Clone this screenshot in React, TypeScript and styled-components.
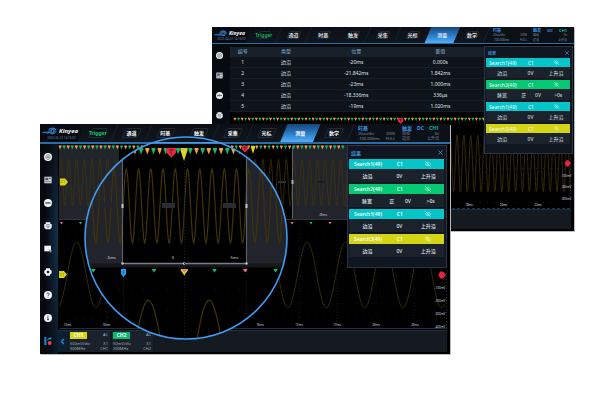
import React from "react";
import styled, { createGlobalStyle } from "styled-components";
import { ChevronLeft, EyeOff, X } from "lucide-react";

const GlobalStyle = createGlobalStyle`
  * { box-sizing: border-box; }
  body { margin: 0; background: #fff; }
  button { font: inherit; color: inherit; background: none; border: 0; padding: 0; margin: 0; cursor: pointer; }
`;

const Stage = styled.main`
  display: grid;
  grid-template-columns: 40fr 172fr 238fr 124fr 26fr;
  grid-template-rows: 27px 97px 107px 123px;
  min-height: 412px;
  align-content: start;
  background: #fff;
  font-family: "Noto Sans", "Noto Sans CJK SC", sans-serif;
`;

type Size = { $small?: boolean };

const Device = styled.section<Size>`
  position: relative;
  grid-column: ${(p) => (p.$small ? "3 / 5" : "2 / 4")};
  grid-row: ${(p) => (p.$small ? "2 / 4" : "3 / 5")};
  display: flex;
  flex-direction: column;
  min-width: 0;
  background: #05080c;
  color: #dfe5ec;
  box-shadow: 1px 1px 0 #b9bcbf;
`;

const Header = styled.header<Size>`
  display: flex;
  flex: none;
  height: ${(p) => (p.$small ? 17 : 20)}px;
  background: #0c1118;
  border-bottom: ${(p) => (p.$small ? 1 : 2)}px solid #2b6cab;
  overflow: hidden;
`;

const Brand = styled.div<Size>`
  flex: none;
  width: ${(p) => (p.$small ? 37 : 41)}px;
  display: grid;
  grid-template-columns: ${(p) => (p.$small ? 13 : 15)}px auto;
  align-content: center;
  column-gap: 2px;
  padding-left: 2px;
  background: #080c12;
`;

const BrandName = styled.strong<Size>`
  font-size: ${(p) => (p.$small ? 5 : 6)}px;
  line-height: ${(p) => (p.$small ? 7 : 9)}px;
  font-style: italic;
  color: #f4f7fb;
`;

const BrandDate = styled.time`
  grid-column: 1 / 3;
  font-size: 3px;
  line-height: 4px;
  text-align: center;
  white-space: nowrap;
  color: #6a8098;
`;

const Menu = styled.nav<Size>`
  flex: none;
  display: grid;
  grid-template-columns: repeat(8, 1fr);
  width: ${(p) => (p.$small ? 238 : 270)}px;
`;

const MenuItem = styled.button<Size & { $kind?: "trigger" | "active" }>`
  position: relative;
  z-index: 0;
  font-size: 5px;
  font-weight: ${(p) => (p.$small ? 500 : 700)};
  line-height: 8px;
  white-space: nowrap;
  color: ${(p) => (p.$kind === "trigger" ? "#16c76a" : "#f2f5f8")};
  &::before {
    content: "";
    position: absolute;
    inset: 0;
    z-index: -1;
    transform: skewX(-23deg);
    border-right: 1px solid #1c222b;
    background: ${(p) =>
      p.$kind === "active" ? "linear-gradient(#17467a, #2f83d0 60%, #55aef5)" : "linear-gradient(#0b0f15, #10161e)"};
  }
  &::after {
    content: "";
    position: absolute;
    inset: 4px 9px;
    z-index: -1;
    transform: skewX(-23deg);
    border: 1px solid ${(p) => (p.$kind === "active" ? "transparent" : "#222a33")};
    border-radius: 2px;
  }
`;

const Status = styled.div<Size>`
  display: grid;
  flex: none;
  grid-template-columns: 1fr auto;
  align-content: center;
  width: ${(p) => (p.$small ? 34 : 37)}px;
  margin-left: ${(p) => (p.$small ? 6 : 7)}px;
  font-size: ${(p) => (p.$small ? 3 : 4)}px;
  line-height: 5px;
  white-space: nowrap;
  color: #8793a1;
`;

const StatusTitle = styled.strong<Size>`
  grid-column: 1 / 3;
  display: flex;
  justify-content: space-between;
  font-size: ${(p) => (p.$small ? 4 : 5)}px;
  line-height: ${(p) => (p.$small ? 5 : 6)}px;
  color: #3d8fe4;
`;

const Teal = styled.span`
  color: #12b3a4;
`;

const Body = styled.div`
  flex: 1;
  min-height: 0;
  display: flex;
`;

const Rail = styled.aside<Size>`
  flex: none;
  width: 18px;
  overflow: hidden;
  display: flex;
  flex-direction: column;
  align-items: center;
  padding: 1px 3px 0 0;
  background: ${(p) =>
    p.$small
      ? "linear-gradient(110deg, #070a0f 45%, #12314d)"
      : "linear-gradient(to right, #06090e 30%, transparent), linear-gradient(#0d151e, #123451 45%, #0b1a29)"};
`;

const RailButton = styled.button<Size>`
  flex: none;
  display: grid;
  place-items: center;
  width: 15px;
  height: ${(p) => (p.$small ? 20 : 23)}px;
  svg {
    width: ${(p) => (p.$small ? 7 : 8)}px;
    height: ${(p) => (p.$small ? 7 : 8)}px;
  }
`;

const Main = styled.div`
  position: relative;
  flex: 1;
  min-width: 0;
  display: flex;
  flex-direction: column;
  background: #000;
`;

const Plot = styled.svg`
  display: block;
  width: 100%;
  flex: 1;
  min-height: 0;
`;

const PlotText = styled.text<{ $large?: boolean }>`
  font-size: ${(p) => (p.$large ? 4 : 3)}px;
  fill: #d8dce1;
  text-anchor: middle;
`;

const Footer = styled.footer<Size>`
  flex: none;
  height: ${(p) => (p.$small ? 20 : 22)}px;
  margin: 0 3px 2px 0;
  display: flex;
  gap: 2px;
  background: #151a21;
  border-top: 1px solid #202d3a;
`;

const FooterToggle = styled.button`
  width: 9px;
  display: grid;
  place-items: center;
  color: #2f8fe6;
  background: #0d2033;
`;

const Channel = styled.div`
  display: grid;
  grid-template-columns: 1fr auto;
  align-content: center;
  width: 41px;
  padding: 0 2px 0 1px;
  font-size: 4px;
  line-height: 5px;
  color: #a3aebb;
  background: #1a212a;
`;

const Badge = styled.strong<{ $color: string }>`
  width: 17px;
  margin-bottom: 2px;
  font-size: 5px;
  line-height: 7px;
  text-align: center;
  color: #fff;
  background: ${(p) => p.$color};
`;

const Right = styled.span`
  text-align: right;
`;

const Panel = styled.aside<Size>`
  position: absolute;
  top: ${(p) => (p.$small ? 2 : 1)}px;
  right: ${(p) => (p.$small ? 1 : 3)}px;
  width: ${(p) => (p.$small ? 89 : 100)}px;
  padding: 0 2px ${(p) => (p.$small ? 7 : 8)}px 1px;
  background: #111720;
  border: 1px solid #273646;
`;

const PanelHead = styled.header<Size>`
  display: flex;
  align-items: center;
  justify-content: space-between;
  height: ${(p) => (p.$small ? 11 : 13)}px;
  padding: 0 0 0 2px;
  font-size: ${(p) => (p.$small ? 4 : 5)}px;
  font-weight: 700;
  color: #3b8bd8;
  svg { display: block; }
`;

const Bar = styled.div<Size & { $color: string }>`
  display: grid;
  grid-template-columns: 40% 27% 33%;
  align-items: center;
  height: ${(p) => (p.$small ? 9 : 10)}px;
  font-size: 5px;
  line-height: 8px;
  font-weight: ${(p) => (p.$small ? 400 : 600)};
  text-align: center;
  white-space: nowrap;
  color: #f4feff;
  background: ${(p) => p.$color};
  svg { display: block; margin: auto; }
`;

const Detail = styled.div<Size & { $four?: boolean }>`
  display: grid;
  grid-template-columns: ${(p) => (p.$four ? "38% 14% 20% 28%" : "39% 28% 33%")};
  align-items: center;
  height: ${(p) => (p.$small ? 11 : 13)}px;
  margin-bottom: 2px;
  font-size: 5px;
  line-height: 8px;
  font-weight: ${(p) => (p.$small ? 400 : 500)};
  text-align: center;
  white-space: nowrap;
  background: #1b222b;
`;

const Table = styled.table`
  width: calc(100% - 89px);
  table-layout: fixed;
  border-collapse: collapse;
  border-spacing: 0;
  background: #0f141b;
  border-top: 3px solid #07090d;
  font-size: 5px;
  line-height: 7px;
  text-align: center;
  th, td { padding: 0; height: 11px; }
  th { font-weight: 500; color: #6f93b5; background: #182029; }
  tbody td { box-shadow: inset 0 -1px #171d25; }
`;

const Col = styled.col<{ $share: number }>`
  width: ${(p) => p.$share}%;
`;

const Lens = styled.svg`
  position: absolute;
  left: 44px;
  top: 12px;
  width: 204px;
  height: 204px;
  display: block;
  pointer-events: none;
`;

const GREEN = "#16b765";
const ORANGE = "#efa640";
const PINK = "#ef6aa5";

function wave(x0: number, x1: number, peak: number, period: number, mid: number, amp: number) {
  const step = period / 24;
  let d = "";
  for (let x = x0; x <= x1; x += step) {
    const y = mid - amp * Math.cos(((x - peak) / period) * Math.PI * 2);
    d += `${d ? "L" : "M"}${x.toFixed(2)} ${y.toFixed(2)}`;
  }
  return d;
}

type WaveProps = { range: [number, number]; peak: number; period: number; mid: number; amp: number; width?: number };
const Wave = ({ range, peak, period, mid, amp, width = 0.8 }: WaveProps) => (
  <path d={wave(range[0], range[1], peak, period, mid, amp)} fill="none" stroke="#3f330a" strokeWidth={width} />
);

const Tri = ({ x, y, w, h, fill }: { x: number; y: number; w: number; h: number; fill: string }) => (
  <path d={`M${x - w / 2} ${y}h${w}v${h * 0.2}L${x} ${y + h}L${x - w / 2} ${y + h * 0.2}z`} fill={fill} />
);

const Triangles = ({ from, to, y, pitch, w, h }: { from: number; to: number; y: number; pitch: number; w: number; h: number }) => (
  <g>
    {Array.from({ length: Math.floor((to - from) / pitch) + 1 }, (_, i) => (
      <Tri key={i} x={from + i * pitch} y={y} w={w} h={h} fill={i % 2 ? GREEN : ORANGE} />
    ))}
  </g>
);

const Dots = ({ x, y, w, h, dx, dy }: { x: number; y: number; w: number; h: number; dx: number; dy: number }) => (
  <g stroke="#26292e" strokeWidth="0.7">
    {Array.from({ length: Math.floor(h / dy) + 1 }, (_, i) => (
      <path key={i} d={`M${x} ${y + i * dy}h${w}`} strokeDasharray={`1 ${dx - 1}`} />
    ))}
  </g>
);

const Flag = ({ x, y }: { x: number; y: number }) => (
  <g>
    <path d={`M${x} ${y - 3.5}h5l3 3.5l-3 3.5h-5z`} fill="#d9d51c" />
    <text x={x + 0.6} y={y + 1.4} fontSize="4" fill="#6b6a10">C1</text>
  </g>
);

const TMark = ({ x, y, r }: { x: number; y: number; r: number }) => (
  <g>
    <path d={`M${x - r} ${y}h${2 * r}v${r}L${x} ${y + 2 * r}L${x - r} ${y + r}z`} fill="#e52a43" />
    <path d={`M${x - r / 2} ${y + r * 0.4}h${r}M${x} ${y + r * 0.4}v${r}`} stroke="#7a1020" strokeWidth="0.9" fill="none" />
  </g>
);

function FrontPlot() {
  return (
    <Plot viewBox="58 144 392 186" preserveAspectRatio="none" role="img" aria-label="CH1">
      <rect x="58" y="144" width="392" height="186" fill="#000" />
      <rect x="59" y="145" width="60" height="74" fill="#22242b" />
      <rect x="292" y="145" width="56" height="74" fill="#22242b" />
      <Dots x={62} y={156} w={286} h={60} dx={8} dy={12} />
      <Wave range={[59, 348]} peak={61} period={7.77} mid={182.5} amp={23.5} />
      <rect x="278" y="181" width="8" height="2" fill="#2c2e34" />
      <rect x="318" y="181" width="6" height="2" fill="#1a1c22" />
      <path d="M292.5 146v73" stroke="#5d6068" />
      <rect x="291.500" y="180" width="2" height="4" fill="#aeb3bb" />
      <path d="M59 219.5h289" stroke="#30343b" />
      <Triangles from={60} to={346} y={145.5} pitch={4.1} w={2.6} h={4} />
      <TMark x={245} y={146} r={3.2} />
      <Tri x={253} y={146} w={4} h={8} fill="#d9d51c" />
      <PlotText x="323" y="216">20ms</PlotText>
      <Flag x={60} y={182} />
      <Dots x={60} y={234} w={385} h={84} dx={8} dy={14} />
      <path d="M107 222v106M299 222v106M337 222v106M376 222v106M414 222v106" stroke="#17191d" strokeDasharray="1 2" />
      {[61.5, 292, 330].map((x) => <Tri key={x} x={x} y={222} w={2.5} h={2.5} fill={PINK} />)}
      {[80.5, 311].map((x) => <Tri key={x} x={x} y={222} w={2.5} h={2.5} fill={GREEN} />)}
      <Wave range={[59, 446]} peak={76.7} period={38.4} mid={275} amp={33} />
      <Flag x={59} y={274.5} />
      <path d="M446 275l-3-3.5h-3l-1.5 3.5l1.5 3.5h3z" fill="#e52340" />
      <path d="M446.5 222v106" stroke="#23303b" strokeDasharray="1 2" />
      {["-100mV", "-200mV", "-300mV", "-400mV"].map((t, i) => (
        <PlotText key={t} x="440" y={289 + i * 13}>{t}</PlotText>
      ))}
      {["-12ms", "-16ms", "16ms", "17ms", "17ms", "20ms", "20ms"].map((t, i) => (
        <PlotText key={i} x={[67, 106, 260, 299, 337, 376, 415][i]} y="326">{t}</PlotText>
      ))}
      <path d="M59 328.5h388" stroke="#1c2f42" />
    </Plot>
  );
}

function BackPlot() {
  return (
    <Plot viewBox="230 114 344 95" preserveAspectRatio="none" role="img" aria-label="CH1">
      <rect x="230" y="114" width="344" height="95" fill="#000" />
      <Triangles from={235} to={486} y={119.5} pitch={3.55} w={2.4} h={3.2} />
      <TMark x={400.5} y={120} r={2.8} />
      <Dots x={452} y={136} w={118} h={66} dx={7} dy={11} />
      <Wave range={[450, 571]} peak={457} period={6.9} mid={164} amp={27.5} />
      <path d="M570.5 136v72" stroke="#1b4357" strokeDasharray="1 2" />
      <path d="M571 164l-2.5-3h-2l-2 3l2 3h2z" fill="#e52340" />
      {["-100mV", "-200mV", "-300mV"].map((t, i) => (
        <PlotText key={t} x="566" y={177 + i * 11.5}>{t}</PlotText>
      ))}
      {["18ms", "20ms", "22ms"].map((t, i) => (
        <PlotText key={t} x={469 + i * 34.5} y="206">{t}</PlotText>
      ))}
      <path d="M232 208h339" stroke="#16384c" strokeDasharray="3 2" />
    </Plot>
  );
}

function Magnifier() {
  return (
    <Lens viewBox="84 136 204 204" aria-hidden="true">
      <defs>
        <clipPath id="lens"><circle cx="186" cy="238" r="101" /></clipPath>
      </defs>
      <g clipPath="url(#lens)">
        <rect x="84" y="144" width="204" height="196" fill="#000" />
        <path d="M84 142.8h204" stroke="#4c9ae6" strokeWidth="1.6" />
        <rect x="84" y="146" width="39" height="118" fill="#22242b" />
        <rect x="246" y="146" width="42" height="118" fill="#22242b" />
        <Dots x={90} y={162} w={196} h={90} dx={12} dy={19} />
        <Wave range={[84, 288]} peak={126.3} period={12.25} mid={206} amp={37} width={1.2} />
        <rect x="103" y="203" width="9" height="5" fill="#22242b" />
        <rect x="162" y="203" width="13" height="5" fill="#2a2c32" />
        <rect x="223" y="203" width="13" height="5" fill="#2a2c32" />
        <path d="M122.5 156v108M246.5 156v108" stroke="#5d6068" strokeWidth="1.2" />
        <path d="M84 265.5h204" stroke="#15171a" strokeWidth="4" />
        <path d="M123 263.5h124" stroke="#7b7d86" strokeWidth="1.6" />
        <g fill="#c3c6cc">
          <rect x="121.5" y="204" width="2" height="4" />
          <rect x="245.5" y="204" width="2" height="4" />
          <circle cx="122.5" cy="263.5" r="1.2" />
          <circle cx="184" cy="263.5" r="1.2" />
          <circle cx="246.5" cy="263.5" r="1.2" />
        </g>
        <Triangles from={110.4} to={270} y={148} pitch={6.15} w={4} h={6.5} />
        <TMark x={171.3} y={148} r={4.8} />
        <Tri x={184} y={148} w={7} h={13} fill="#dcd51c" />
        <rect x="182.5" y="148" width="3" height="2" fill="#b9b9a0" />
        <PlotText $large x="111" y="259">-5ms</PlotText>
        <PlotText $large x="173" y="259">0</PlotText>
        <PlotText $large x="234.5" y="259">5ms</PlotText>
        <Dots x={95} y={290} w={190} h={42} dx={12} dy={20} />
        <path d="M123.5 268v72M184.5 161v179M246.5 268v72" stroke="#1b1e22" strokeDasharray="1 2" />
        {[93.3, 154, 214.5, 275.6].map((x) => <Tri key={x} x={x} y={269} w={4} h={3.6} fill={GREEN} />)}
        <path d="M121 269h5v5l-2.5 3l-2.5-3z" fill="#18a4f2" />
        <path d="M123.5 270.5v3.5" stroke="#075f9e" strokeWidth="0.8" />
        <Tri x={184.3} y={269} w={7} h={6.5} fill="#dcd51c" />
        <Tri x={184.3} y={269} w={4} h={3.6} fill={PINK} />
        <Tri x={245.3} y={269} w={4} h={3.6} fill={PINK} />
        <Wave range={[84, 288]} peak={148.3} period={60.8} mid={357} amp={57} width={1.2} />
      </g>
      <circle cx="186" cy="238" r="101" fill="none" stroke="#419bf2" strokeWidth="1.6" />
    </Lens>
  );
}

const BrandMark = () => (
  <svg viewBox="0 0 30 16" aria-hidden="true">
    <path d="M1 11C5 7 10 11 14 7C18 1 27 1 29 7C30 13 24 16 19 13" fill="#174b82" />
    <path d="M1 11C6 9 9 14 15 11L20 14L25 12" fill="none" stroke="#2b88dc" strokeWidth="2" />
    <path d="M13 6C18 1 26 1 28 6" fill="none" stroke="#3e9df2" strokeWidth="2" />
    <circle cx="21" cy="8" r="3" fill="#0a1420" stroke="#68b5f5" />
  </svg>
);

const railIcons: Record<string, React.ReactNode> = {
  target: <><circle cx="12" cy="12" r="12" /><circle cx="12" cy="12" r="7" fill="none" stroke="#5a636d" strokeWidth="2" /><circle cx="12" cy="12" r="3" fill="none" stroke="#2a323b" strokeWidth="1.5" /></>,
  screen: <><path d="M1 2h22v20H1z" fill="#c9cfd6" /><path d="M4 5h9v8H4zM15 5h5v4h-5z" fill="#59636e" /><path d="M4 17h4M10 17h4M16 17h4M5 11l3-3 4 3" stroke="#39424c" strokeWidth="2" fill="none" /></>,
  run: <><circle cx="12" cy="12" r="12" /><path d="M5 10v4h3v-4zM10 10v4h4v-4zM16 14v-4l3 4v-4" fill="none" stroke="#20272f" strokeWidth="1.6" /></>,
  print: <><path d="M5 1h14v5h4v11l-5 5H6l-5-5V6h4z" /><path d="M6 8h12M5 13h14M8 17h8" stroke="#4a545e" strokeWidth="1.8" /></>,
  note: <><path d="M1 2h20v17H1z" /><path d="M16 14l3 3 5-2-4 8z" fill="#dfe5eb" stroke="#17212c" /></>,
  gear: <><path d="M7 1h10l2 4 4 3v8l-4 3-2 4H7l-2-4-4-3V8l4-3z" /><circle cx="12" cy="12" r="4" fill="#111e2b" /></>,
  help: <><circle cx="12" cy="12" r="12" /><path d="M8.500 9.500a3.500 3.500 0 1 1 5 3c-1 .6-1.500 1-1.500 2.500M12 17v2" stroke="#1d2a37" strokeWidth="2.400" fill="none" /></>,
  info: <><circle cx="12" cy="12" r="12" /><path d="M12 5v3M10 10h2v7M9 17h6" stroke="#1d2a37" strokeWidth="2.400" fill="none" /></>,
  brand: <><path d="M1 0h6v24H1z" fill="#1c83d8" /><path d="M7 12l8-10h8l-2 5h-6z" fill="#2aa3ee" /><circle cx="17" cy="18" r="6" fill="#f0374f" /></>,
};

const railNames = Object.keys(railIcons);

const SideRail = ({ small }: { small?: boolean }) => (
  <Rail $small={small}>
    {railNames.slice(0, small ? 4 : 9).map((name) => (
      <RailButton key={name} $small={small} aria-label={name}>
        <svg viewBox="0 0 24 24" fill="#f2f5f8">{railIcons[name]}</svg>
      </RailButton>
    ))}
  </Rail>
);

const menu = ["Trigger", "通道", "时基", "触发", "采集", "光标", "测量", "数学"];

const TopBar = ({ small }: { small?: boolean }) => (
  <Header $small={small}>
    <Brand $small={small}>
      <BrandMark />
      <BrandName $small={small}>Kinyea</BrandName>
      <BrandDate>2025-04-22 14:16:02</BrandDate>
    </Brand>
    <Menu $small={small}>
      {menu.map((m, i) => (
        <MenuItem key={m} $small={small} $kind={i === 0 ? "trigger" : i === 6 ? "active" : undefined}>{m}</MenuItem>
      ))}
    </Menu>
    <Status $small={small}>
      <StatusTitle $small={small}>时基</StatusTitle>
      <span>20us/div</span><Right>200S</Right>
      <span>-100.000ms</span><Right>FULL</Right>
    </Status>
    <Status $small={small}>
      <StatusTitle $small={small}><span>触发</span><span>DC</span><Teal>CH1</Teal></StatusTitle>
      <span>自动</span><Right>0v</Right>
      <span>边沿</span><Right>上升沿</Right>
    </Status>
  </Header>
);

const CYAN = "#05c5c9";
const results = [
  { name: "Search1(49)", color: CYAN, cells: ["边沿", "0V", "上升沿"] },
  { name: "Search2(49)", color: "#06c774", cells: ["脉宽", "正", "0V", ">0s"] },
  { name: "Search1(49)", color: CYAN, cells: ["边沿", "0V", "上升沿"] },
  { name: "Search3(49)", color: "#d3d414", cells: ["边沿", "0V", "上升沿"] },
];

const Results = ({ small }: { small?: boolean }) => (
  <Panel $small={small}>
    <PanelHead $small={small}>
      <span>结果</span>
      <button aria-label="关闭"><X size={small ? 6 : 7} strokeWidth={3} /></button>
    </PanelHead>
    {results.map((r, i) => (
      <section key={i}>
        <Bar $small={small} $color={r.color}>
          <span>{r.name}</span>
          <span>C1</span>
          <button aria-label="隐藏"><EyeOff size={small ? 5 : 6} strokeWidth={2} /></button>
        </Bar>
        <Detail $small={small} $four={r.cells.length === 4}>
          {r.cells.map((c) => <span key={c}>{c}</span>)}
        </Detail>
      </section>
    ))}
  </Panel>
);

const rows = [
  ["1", "边沿", "-20ms", "0.000s"],
  ["2", "边沿", "-21.842ms", "1.842ms"],
  ["3", "边沿", "-23ms", "1.000ms"],
  ["4", "边沿", "-18.336ms", "336μs"],
  ["5", "边沿", "-19ms", "1.020ms"],
];

export default function App() {
  return (
    <>
      <GlobalStyle />
      <Stage>
        <Device $small>
          <TopBar small />
          <Body>
            <SideRail small />
            <Main>
              <Table>
                <colgroup><Col $share={10} /><Col $share={24} /><Col $share={31} /><Col $share={35} /></colgroup>
                <thead>
                  <tr>{["编号", "类型", "位置", "差值"].map((h) => <th key={h}>{h}</th>)}</tr>
                </thead>
                <tbody>
                  {rows.map((r) => (
                    <tr key={r[0]}>{r.map((c, i) => <td key={i}>{c}</td>)}</tr>
                  ))}
                </tbody>
              </Table>
              <BackPlot />
              <Footer $small />
              <Results small />
            </Main>
          </Body>
        </Device>
        <Device>
          <TopBar />
          <Body>
            <SideRail />
            <Main>
              <FrontPlot />
              <Footer>
                <FooterToggle aria-label="返回"><ChevronLeft size={9} strokeWidth={3} /></FooterToggle>
                <Channel>
                  <Badge $color="#d3d414">CH1</Badge><Right>AC</Right>
                  <span>500mV/div</span><Right>X1</Right>
                  <span>500MHz</span><Right>CH1</Right>
                </Channel>
                <Channel>
                  <Badge $color="#06b870">CH2</Badge><Right>AC</Right>
                  <span>50mV/div</span><Right>X1</Right>
                  <span>200MHz</span><Right>CH2</Right>
                </Channel>
              </Footer>
              <Results />
            </Main>
          </Body>
          <Magnifier />
        </Device>
      </Stage>
    </>
  );
}
